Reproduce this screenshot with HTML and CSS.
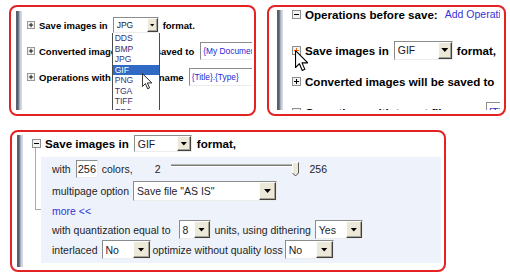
FILE: index.html
```html
<!DOCTYPE html>
<html lang="en">
<head>
    <meta charset="UTF-8">
    <title>Save format options</title>
    <link rel="stylesheet" href="styles.css">
</head>
<body>
<div class="shots">
    <div class="top">
        <!-- format list opened -->
        <div class="shot shot-a">
            <div class="pane">
                <div class="pane-bar"></div>
                <div class="pane-body">
                    <div class="row r1">
                        <svg class="tog" viewBox="0 0 9 9"><rect x="0.5" y="0.5" width="8" height="8"/><path d="M2 4.5h5M4.5 2v5"/></svg>
                        <span class="lbl">Save images in</span>
                        <div class="select sel-jpg">
                            <span class="val">JPG</span><span class="btn"></span>
                            <ul class="list">
                                <li>DDS</li>
                                <li>BMP</li>
                                <li>JPG</li>
                                <li class="on">GIF</li>
                                <li>PNG</li>
                                <li>TGA</li>
                                <li>TIFF</li>
                                <li>EPS</li>
                            </ul>
                            <svg class="cursor cursor-sm" viewBox="0 0 12 20"><path d="M0.5 0.5v15.5l3.6-3.5 2.6 6.2 2.4-1-2.6-6h5.3z"/></svg>
                        </div>
                        <span class="lbl">format.</span>
                    </div>
                    <div class="row r2">
                        <svg class="tog" viewBox="0 0 9 9"><rect x="0.5" y="0.5" width="8" height="8"/><path d="M2 4.5h5M4.5 2v5"/></svg>
                        <span class="lbl">Converted images will be saved to</span>
                        <div class="field field-docs">{My Documents}</div>
                    </div>
                    <div class="row r2">
                        <svg class="tog" viewBox="0 0 9 9"><rect x="0.5" y="0.5" width="8" height="8"/><path d="M2 4.5h5M4.5 2v5"/></svg>
                        <span class="lbl">Operations with target file name</span>
                        <div class="field field-name">{Title}.{Type}</div>
                    </div>
                </div>
            </div>
        </div>

        <!-- hovering the expander -->
        <div class="shot shot-b">
            <div class="pane">
                <div class="pane-bar"></div>
                <div class="pane-body">
                    <div class="row b0">
                        <svg class="tog" viewBox="0 0 9 9"><rect x="0.5" y="0.5" width="8" height="8"/><path d="M2 4.5h5"/></svg>
                        <span class="lbl">Operations before save:</span>
                        <a class="link add-op">Add Operations</a>
                    </div>
                    <div class="row b1">
                        <span class="tog-wrap">
                            <svg class="tog hot" viewBox="0 0 9 9"><rect x="0.5" y="0.5" width="8" height="8"/><path d="M2 4.5h5M4.5 2v5"/></svg>
                            <svg class="cursor cursor-lg" viewBox="0 0 12 20"><path d="M0.5 0.5v15.5l3.6-3.5 2.6 6.2 2.4-1-2.6-6h5.3z"/></svg>
                        </span>
                        <span class="lbl">Save images in</span>
                        <div class="select sel-gif-b"><span class="val">GIF</span><span class="btn"></span></div>
                        <span class="lbl">format,</span>
                    </div>
                    <div class="row b2">
                        <svg class="tog" viewBox="0 0 9 9"><rect x="0.5" y="0.5" width="8" height="8"/><path d="M2 4.5h5M4.5 2v5"/></svg>
                        <span class="lbl">Converted images will be saved to</span>
                    </div>
                    <div class="row b2">
                        <svg class="tog" viewBox="0 0 9 9"><rect x="0.5" y="0.5" width="8" height="8"/><path d="M2 4.5h5M4.5 2v5"/></svg>
                        <span class="lbl">Operations with target file name</span>
                        <div class="field field-b">{Title}.{Type}</div>
                    </div>
                </div>
            </div>
        </div>
    </div>

    <!-- expanded GIF options -->
    <div class="shot shot-c">
        <div class="pane">
            <div class="pane-bar"></div>
            <div class="pane-body">
                <div class="row head">
                    <svg class="tog" viewBox="0 0 9 9"><rect x="0.5" y="0.5" width="8" height="8"/><path d="M2 4.5h5"/></svg>
                    <span class="lbl">Save images in</span>
                    <div class="select sel-gif-c"><span class="val">GIF</span><span class="btn"></span></div>
                    <span class="lbl fmt">format,</span>
                </div>
                <div class="opts">
                    <div class="opt o-colors">
                        <span>with</span>
                        <div class="num">256</div>
                        <span class="colors">colors,</span>
                        <span class="min">2</span>
                        <div class="slider">
                            <div class="track"></div>
                            <svg class="thumb" viewBox="0 0 7 15">
                                <polygon points="0.5,0.5 6.5,0.5 6.5,11 3.5,14 0.5,11" fill="#ece9d8"/>
                                <polyline points="0.5,11 0.5,0.5 6.5,0.5" fill="none" stroke="#fff"/>
                                <polyline points="6.5,0.5 6.5,11 3.5,14 0.5,11" fill="none" stroke="#555"/>
                            </svg>
                        </div>
                        <span class="max">256</span>
                    </div>
                    <div class="opt o-multi">
                        <span>multipage option</span>
                        <div class="select sel-multi"><span class="val">Save file "AS IS"</span><span class="btn"></span></div>
                    </div>
                    <div class="opt o-more">
                        <a class="link">more &lt;&lt;</a>
                    </div>
                    <div class="opt o-quant">
                        <span>with quantization equal to</span>
                        <div class="select sel-8"><span class="val">8</span><span class="btn"></span></div>
                        <span>units, using dithering</span>
                        <div class="select sel-yes"><span class="val">Yes</span><span class="btn"></span></div>
                    </div>
                    <div class="opt o-inter">
                        <span>interlaced</span>
                        <div class="select sel-no"><span class="val">No</span><span class="btn"></span></div>
                        <span class="optimize">optimize without quality loss</span>
                        <div class="select sel-no sel-no2"><span class="val">No</span><span class="btn"></span></div>
                    </div>
                </div>
            </div>
        </div>
    </div>
</div>
</body>
</html>
```

FILE: styles.css
```css
body {
    margin: 0;
    background: #fff;
    font-family: "Liberation Sans", Arial, sans-serif;
    color: #1e1e1e;
}
.shots {
    padding: 5px 0 0 9px;
}
.top {
    display: flex;
    gap: 11px;
}

/* red framed crops */
.shot {
    display: flex;
    box-sizing: border-box;
    border: 2px solid #e42222;
    border-radius: 8px;
}
.shot-a {
    width: 247px;
    height: 111px;
    padding: 4px 2px 4px 5px;
}
.shot-b {
    width: 239px;
    height: 111px;
    padding: 3px 4px 4px 8px;
}
.shot-c {
    width: 436px;
    height: 142px;
    padding: 3px 3px 3px 5px;
    margin: 14px 0 0 1px;
}
.pane {
    flex: 1;
    display: flex;
    min-width: 0;
    overflow: hidden;
}
.pane-bar {
    flex: none;
    width: 6px;
    background: linear-gradient(to right, #58606c 0, #58606c 2px, #8a93a0 3px, #c4cbd8 4px, #d6dce8 6px);
}
.pane-body {
    flex: 1;
    min-width: 0;
    position: relative;
    padding-left: 9px;
}
.shot-a .pane-body {
    padding-left: 5px;
}

/* rows */
.row {
    display: flex;
    align-items: center;
    gap: 4px;
    white-space: nowrap;
}
.row > * {
    flex: none;
}
.lbl {
    font-weight: bold;
    color: #000;
}
.link {
    color: #3434d6;
}

.shot-a .row {
    height: 18px;
    font-size: 9.5px;
}
.shot-a .r1 {
    margin-top: 5px;
}
.shot-a .r2 {
    margin-top: 8px;
}
.shot-b .row {
    height: 20px;
    font-size: 11.6px;
}
.shot-b .b0 {
    margin-top: -6px;
}
.shot-b .b1 {
    margin-top: 16px;
}
.shot-b .b2 {
    margin-top: 11px;
}
.add-op {
    font-size: 10.5px;
    margin-left: 3px;
}
.tog-wrap {
    position: relative;
    display: flex;
}

/* expander box */
.tog {
    width: 9px;
    height: 9px;
}
.shot-a .tog {
    width: 8px;
    height: 8px;
}
.tog rect {
    fill: #f3f3f1;
    stroke: #8e8e8e;
}
.tog path {
    stroke: #000;
}
.tog.hot path {
    stroke: #f26a00;
}

.cursor {
    position: absolute;
    z-index: 3;
}
.cursor path {
    fill: #fff;
    stroke: #000;
    stroke-width: 1;
    stroke-linejoin: round;
}
.cursor-sm {
    width: 10px;
    height: 17px;
    left: 28px;
    top: 55px;
}
.cursor-lg {
    width: 13px;
    height: 22px;
    left: 3px;
    top: 4px;
}

/* combo box */
.select {
    position: relative;
    display: flex;
    box-sizing: border-box;
    background: #fff;
    border: 1px solid;
    border-color: #8c8c8c #ececec #ececec #8c8c8c;
    font-size: 10.5px;
}
.select .val {
    flex: 1;
    padding-left: 3px;
    display: flex;
    align-items: center;
    color: #1a1a2a;
    overflow: hidden;
}
.select .btn {
    flex: none;
    width: 16px;
    box-sizing: border-box;
    background: #ece9d8;
    border: 1px solid;
    border-color: #fdfdfd #404040 #404040 #fdfdfd;
    box-shadow: inset -1px -1px #a6a498;
    display: flex;
    align-items: center;
    justify-content: center;
}
.select .btn::after {
    content: "";
    width: 7px;
    height: 4px;
    background: #000;
    clip-path: polygon(0 0, 100% 0, 50% 100%);
}
.sel-jpg {
    width: 46px;
    height: 16px;
    font-size: 8.5px;
    margin-left: 1px;
}
.sel-jpg .btn {
    width: 11px;
}
.sel-jpg .btn::after {
    width: 5px;
    height: 3px;
}
.sel-gif-b {
    width: 59px;
    height: 19px;
    margin-left: 1px;
}
.sel-gif-b .btn {
    width: 14px;
}
.sel-gif-c {
    width: 58px;
    height: 17px;
    margin-left: 1px;
}
.sel-gif-c .btn {
    width: 14px;
}
.fmt {
    margin-left: 1px;
}

/* opened format list */
.list {
    position: absolute;
    left: -2px;
    top: calc(100% + 1px);
    width: 48px;
    margin: 0;
    padding: 0;
    list-style: none;
    box-sizing: border-box;
    background: #fff;
    border: 1px solid #4c4c4c;
    border-top: none;
    z-index: 2;
}
.list li {
    height: 10.5px;
    line-height: 10.5px;
    padding-left: 2px;
    font-size: 8.6px;
    color: #3c3478;
}
.list li.on {
    background: #316ac5;
    color: #fff;
}

/* text fields */
.field {
    box-sizing: border-box;
    height: 18px;
    width: 80px;
    padding-left: 2px;
    display: flex;
    align-items: center;
    background: #fff;
    border: 1px solid;
    border-color: #8c8c8c #ececec #ececec #8c8c8c;
    font-size: 8.4px;
    color: #2828d4;
}
.field-docs {
    margin-left: 2px;
}
.field-name {
    margin-left: 1px;
}
.field-b {
    height: 20px;
    font-size: 10.5px;
}

/* expanded options */
.head {
    height: 17px;
    font-size: 11.6px;
}
.opts {
    position: relative;
    margin: 5px 0 0 9px;
    padding: 1px 0 3px 11px;
    background: #eef2fb;
    font-size: 10.5px;
}
.opts::before {
    content: "";
    position: absolute;
    left: -6px;
    top: -9px;
    width: 5px;
    height: 61px;
    border-left: 1px solid #aaa;
    border-bottom: 1px solid #aaa;
}
.opt {
    display: flex;
    align-items: center;
    gap: 4px;
    white-space: nowrap;
}
.opt > * {
    flex: none;
}
.o-colors {
    height: 22px;
}
.o-multi {
    height: 22px;
}
.o-more {
    height: 18px;
}
.o-quant {
    height: 19px;
}
.o-inter {
    height: 21px;
}
.num {
    box-sizing: border-box;
    width: 22px;
    height: 18px;
    margin-left: 1px;
    padding-left: 1px;
    display: flex;
    align-items: center;
    background: #fff;
    border: 1px solid;
    border-color: #8c8c8c #ececec #ececec #8c8c8c;
    font-size: 11px;
    color: #1a1a2a;
}
.min {
    margin-left: 18px;
}
.slider {
    position: relative;
    width: 128px;
    height: 15px;
    margin-left: 7px;
}
.track {
    position: absolute;
    left: 0;
    right: 5px;
    top: 2px;
    height: 1px;
    background: #7c7c7c;
    border-top: 1px solid #b4b4b4;
    border-bottom: 1px solid #fff;
}
.thumb {
    position: absolute;
    right: 0;
    top: 0;
    width: 7px;
    height: 15px;
}
.max {
    margin-left: 6px;
}
.sel-multi {
    width: 144px;
    height: 20px;
}
.sel-multi .btn {
    width: 17px;
}
.sel-8 {
    width: 32px;
    height: 19px;
    margin-left: 4px;
}
.sel-yes {
    width: 48px;
    height: 19px;
}
.sel-no {
    width: 49px;
    height: 19px;
}
.sel-no .btn {
    width: 17px;
}
.optimize {
    margin-left: -2px;
}
.sel-no2 {
    margin-left: -2px;
}
```
